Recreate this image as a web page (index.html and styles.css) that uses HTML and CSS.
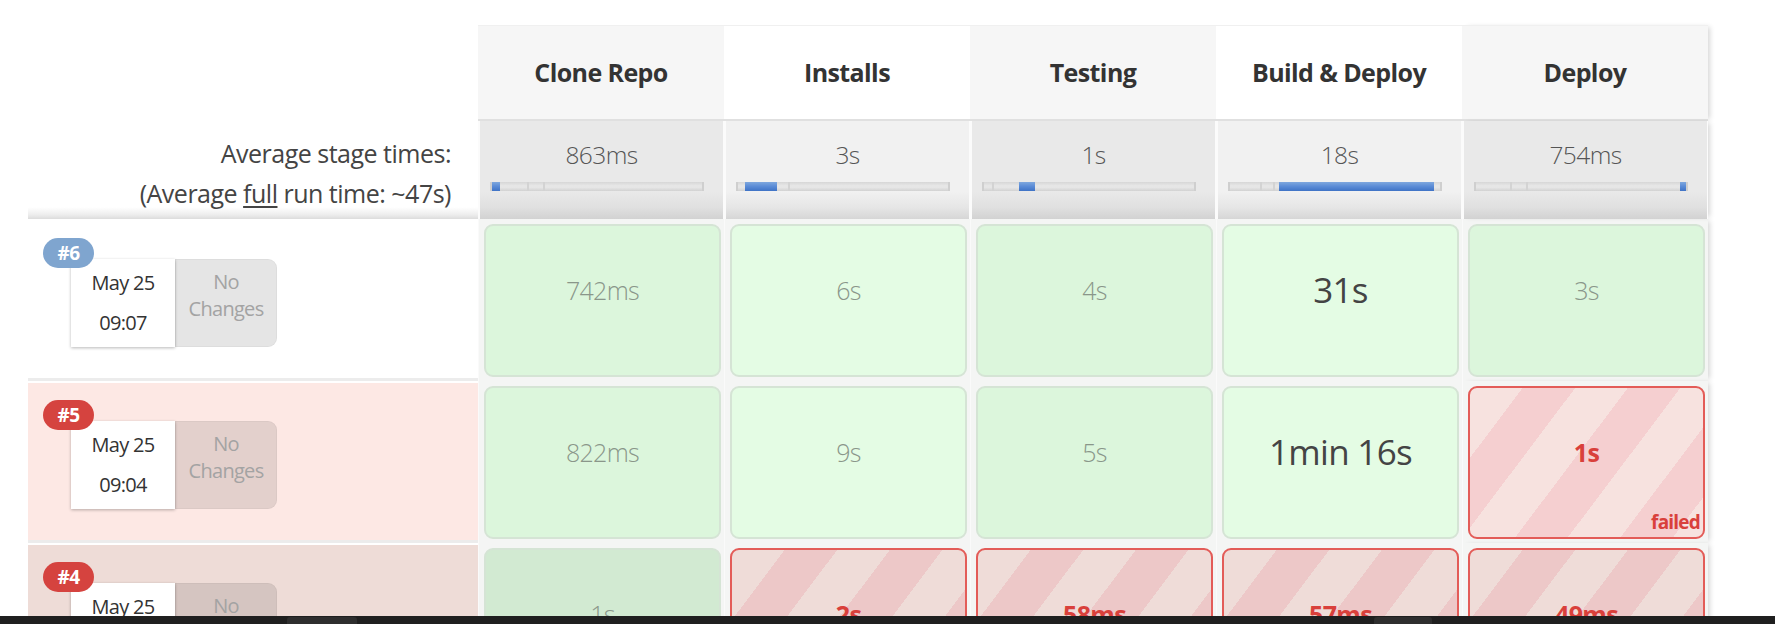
FILE: index.html
```html
<!DOCTYPE html>
<html>
<head>
<meta charset="utf-8">
<link rel="stylesheet" href="styles.css">
</head>
<body>
<div class="board">
  <div class="corner"></div>
  <div class="sh dk">Clone Repo</div>
  <div class="sh lt">Installs</div>
  <div class="sh dk">Testing</div>
  <div class="sh lt">Build &amp; Deploy</div>
  <div class="sh dk last">Deploy</div>

  <div class="avg-label">
    <div>Average stage times:</div>
    <div>(Average <u>full</u> run time: ~47s)</div>
  </div>
  <div class="avg dk"><div class="avg-time">863ms</div><div class="bar"><span class="mk" style="left:35px"></span><span class="mk" style="left:51px"></span><span class="fill" style="left:0;width:8px"></span></div></div>
  <div class="avg lt"><div class="avg-time">3s</div><div class="bar"><span class="mk" style="left:50px"></span><span class="fill" style="left:7px;width:32px"></span></div></div>
  <div class="avg dk"><div class="avg-time">1s</div><div class="bar"><span class="mk" style="left:8px"></span><span class="fill" style="left:35px;width:16px"></span></div></div>
  <div class="avg lt"><div class="avg-time">18s</div><div class="bar"><span class="mk" style="left:30px"></span><span class="mk" style="left:43px"></span><span class="fill" style="left:49px;width:155px"></span></div></div>
  <div class="avg dk last"><div class="avg-time">754ms</div><div class="bar"><span class="mk" style="left:34px"></span><span class="mk" style="left:50px"></span><span class="fill" style="left:204px;width:6px"></span></div></div>

  <div class="run plain">
    <span class="badge blue">#6</span>
    <div class="when"><div>May 25</div><div>09:07</div></div>
    <div class="changes">No<br>Changes</div>
  </div>
  <div class="cellwrap"><div class="cell ok dkc"><span class="dur">742ms</span></div></div>
  <div class="cellwrap"><div class="cell ok ltc"><span class="dur">6s</span></div></div>
  <div class="cellwrap"><div class="cell ok dkc"><span class="dur">4s</span></div></div>
  <div class="cellwrap"><div class="cell ok ltc"><span class="dur big">31s</span></div></div>
  <div class="cellwrap last"><div class="cell ok dkc"><span class="dur">3s</span></div></div>

  <div class="run failed">
    <span class="badge red">#5</span>
    <div class="when"><div>May 25</div><div>09:04</div></div>
    <div class="changes">No<br>Changes</div>
  </div>
  <div class="cellwrap"><div class="cell ok dkc"><span class="dur">822ms</span></div></div>
  <div class="cellwrap"><div class="cell ok ltc"><span class="dur">9s</span></div></div>
  <div class="cellwrap"><div class="cell ok dkc"><span class="dur">5s</span></div></div>
  <div class="cellwrap"><div class="cell ok ltc"><span class="dur big">1min 16s</span></div></div>
  <div class="cellwrap last"><div class="cell fail"><span class="dur red">1s</span><span class="failed-tag">failed</span></div></div>

  <div class="run failed hover">
    <span class="badge red">#4</span>
    <div class="when"><div>May 25</div><div>09:01</div></div>
    <div class="changes">No<br>Changes</div>
  </div>
  <div class="cellwrap"><div class="cell ok hov"><span class="dur">1s</span></div></div>
  <div class="cellwrap"><div class="cell fail hov"><span class="dur red">2s</span></div></div>
  <div class="cellwrap"><div class="cell fail hov"><span class="dur red">58ms</span></div></div>
  <div class="cellwrap"><div class="cell fail hov"><span class="dur red">57ms</span></div></div>
  <div class="cellwrap last"><div class="cell fail hov"><span class="dur red">49ms</span></div></div>
</div>
<div class="taskbar"><span class="tb-item one"></span><span class="tb-item two"></span></div>
</body>
</html>
```

FILE: styles.css
```css
html, body {
  margin: 0;
  padding: 0;
  background: #ffffff;
  overflow: hidden;
  height: 624px;
}

body {
  font-family: "Open Sans", "Noto Sans", sans-serif;
  color: #333;
}

.board {
  display: grid;
  grid-template-columns: 450px repeat(5, 246px);
  grid-template-rows: 96px 98px 162px 162px 162px;
  padding: 25px 0 0 28px;
}

.corner {
  background: #fff;
}

.sh {
  display: flex;
  align-items: center;
  justify-content: center;
  font-weight: 700;
  font-size: 25px;
  color: #333;
  border-bottom: 2px solid #e0e0e0;
  border-top: 1px solid #f0f0f0;
  letter-spacing: -0.6px;
  padding-bottom: 2px;
}
.sh.dk { background: #f6f6f6; }
.sh.lt { background: #ffffff; }

.last { box-shadow: 4px 0 5px -2px rgba(0,0,0,0.16); }

.avg-label {
  text-align: right;
  padding: 12px 27px 0 0;
  font-size: 25px;
  line-height: 40px;
  color: #444;
  background: linear-gradient(to bottom, #ffffff 0, #ffffff 88%, #ececec 96%, #dcdcdc 100%);
  letter-spacing: -0.5px;
}
.avg-label u { text-underline-offset: 3px; }

.avg {
  position: relative;
  border-left: 2px solid #fbfbfb;
  border-right: 1px solid #fbfbfb;
  padding-top: 17px;
}
.avg.dk { background: linear-gradient(to bottom, #e9e9e9 0, #e9e9e9 72%, #e0e0e0 88%, #d2d2d2 100%); }
.avg.lt { background: linear-gradient(to bottom, #f1f1f1 0, #f1f1f1 72%, #e6e6e6 88%, #d6d6d6 100%); }

.avg-time {
  text-align: center;
  font-size: 24.5px;
  font-weight: 300;
  color: #555;
  line-height: 34px;
  letter-spacing: -0.6px;
}

.bar {
  position: relative;
  margin: 10px 0 0 10px;
  width: 210px;
  height: 9px;
  background: linear-gradient(to bottom, #d6d6d6 0, #e6e6e6 40%, #e6e6e6 60%, #d2d2d2 100%);
  border-left: 2px solid #cfcfcf;
  border-right: 2px solid #cfcfcf;
}
.mk {
  position: absolute;
  top: 0;
  width: 2px;
  height: 9px;
  background: #d3d3d3;
}
.fill {
  position: absolute;
  top: 0;
  height: 9px;
  background: linear-gradient(to bottom, #7ea7de 0, #5a8bd6 50%, #3f73c6 100%);
}

/* runs */
.run {
  position: relative;
  border-bottom: 3px solid #ececec;
  margin-top: 2px;
}
.run.plain { background: #ffffff; }
.run.failed { background: #fde8e4; }
.run.failed.hover { background: #eedcd7; }

.badge {
  position: absolute;
  left: 15px;
  top: 17px;
  width: 51px;
  height: 30px;
  border-radius: 15px;
  color: #fff;
  font-weight: 700;
  font-size: 19px;
  line-height: 30px;
  text-align: center;
  z-index: 2;
  letter-spacing: -0.6px;
}
.badge.blue { background: #7fa5cf; }
.badge.red { background: #d5433f; }

.when {
  position: absolute;
  left: 43px;
  top: 38px;
  width: 104px;
  height: 88px;
  background: #fff;
  box-shadow: 0 1px 3px rgba(0,0,0,0.28);
  display: flex;
  flex-direction: column;
  justify-content: space-around;
  align-items: center;
  font-size: 20px;
  color: #333;
  padding: 3px 0 5px;
  box-sizing: border-box;
  letter-spacing: -0.7px;
}
.changes {
  position: absolute;
  left: 147px;
  top: 38px;
  width: 102px;
  height: 88px;
  box-sizing: border-box;
  border-radius: 0 9px 9px 0;
  background: rgba(0,0,0,0.10);
  border: 1px solid rgba(0,0,0,0.04);
  color: #a3a3a3;
  font-size: 20px;
  line-height: 27px;
  text-align: center;
  padding-top: 8px;
  letter-spacing: -0.7px;
}

/* stage cells */
.cellwrap {
  background: #f4f5f4;
  padding: 5px 3px 4px 5px;
  border-left: 1px solid #fafafa;
}
.cell {
  box-sizing: border-box;
  height: 153px;
  border-radius: 9px;
  position: relative;
  text-align: center;
  padding-top: 45px;
}
.cell.ok { border: 2px solid #d5e4d5; }
.cell.dkc { background: #dcf6dc; }
.cell.ltc { background: #e4fce4; }
.cell.ok.hov { background: #d2ead2; }

.cell.fail {
  border: 2px solid #e35c58;
  background: repeating-linear-gradient(127deg, #f7e2df 0, #f7e2df 42px, #f5cfd0 42px, #f5cfd0 84px);
}
.cell.fail.hov {
  background: repeating-linear-gradient(127deg, #efdcd8 0, #efdcd8 42px, #edc8c8 42px, #edc8c8 84px);
}

.dur {
  font-size: 25px;
  font-weight: 300;
  color: #8a968a;
  line-height: 38px;
  letter-spacing: -0.7px;
}
.dur.big {
  font-size: 35px;
  color: #444;
  font-weight: 400;
}
.dur.red {
  color: #d9403b;
  font-weight: 700;
  font-size: 25px;
}
.failed-tag {
  position: absolute;
  right: 3px;
  bottom: 2px;
  font-size: 19px;
  font-weight: 700;
  color: #d9403b;
  letter-spacing: -0.8px;
}

.taskbar {
  position: fixed;
  left: 0;
  right: 0;
  bottom: 0;
  height: 8px;
  background: #1f1f1f;
  z-index: 10;
}
.tb-item {
  position: absolute;
  top: 1px;
  height: 7px;
  background: #2e2e2e;
  border-radius: 3px 3px 0 0;
}
.tb-item.one { left: 287px; width: 70px; }
.tb-item.two { left: 1374px; width: 58px; }
```
